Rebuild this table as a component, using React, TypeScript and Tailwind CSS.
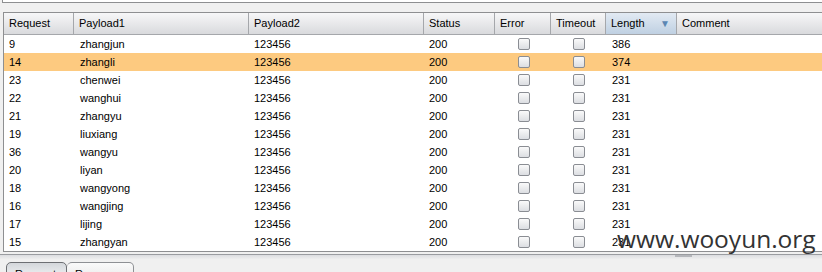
import React from "react";

type Row = {
  req: string;
  p1: string;
  len: string;
  selected?: boolean;
};

const rows: Row[] = [
  { req: "9", p1: "zhangjun", len: "386" },
  { req: "14", p1: "zhangli", len: "374", selected: true },
  { req: "23", p1: "chenwei", len: "231" },
  { req: "22", p1: "wanghui", len: "231" },
  { req: "21", p1: "zhangyu", len: "231" },
  { req: "19", p1: "liuxiang", len: "231" },
  { req: "36", p1: "wangyu", len: "231" },
  { req: "20", p1: "liyan", len: "231" },
  { req: "18", p1: "wangyong", len: "231" },
  { req: "16", p1: "wangjing", len: "231" },
  { req: "17", p1: "lijing", len: "231" },
  { req: "15", p1: "zhangyan", len: "231" },
];

const Checkbox = () => (
  <div className="w-[12px] h-[12px] rounded-[2px] border border-[#8a8d93] bg-gradient-to-b from-[#fafafa] to-[#dcdee2]" />
);

const HeadCell = ({ label, className, sorted }: { label: string; className: string; sorted?: boolean }) => (
  <div
    className={`${className} h-full flex items-center justify-between pl-[5px] pr-[6px] border-r border-[#a5a7ab] ${
      sorted ? "bg-gradient-to-b from-[#e2eaf3] to-[#bfd0e2]" : ""
    }`}
  >
    <span>{label}</span>
    {sorted && <span className="text-[#5b86b3] text-[10px] leading-none">▼</span>}
  </div>
);

export default function App() {
  return (
    <div
      className="relative w-[822px] h-[272px] overflow-hidden bg-[#f0f0f0] text-[11px] text-black"
      style={{ fontFamily: '"Liberation Sans", Arial, sans-serif' }}
    >
      {/* upper panel edge */}
      <div className="ml-[2px] h-[3px] bg-white border-l border-b border-[#8e8f91]" />

      <div className="mt-[9px] ml-[3px] bg-white border-l border-t border-b border-[#8e8f91]">
        <div className="flex h-[22px] bg-gradient-to-b from-[#f7f7f8] to-[#d9dadd] border-b border-[#a5a7ab]">
          <HeadCell label="Request" className="w-[70px]" />
          <HeadCell label="Payload1" className="w-[175px]" />
          <HeadCell label="Payload2" className="w-[175px]" />
          <HeadCell label="Status" className="w-[71px]" />
          <HeadCell label="Error" className="w-[56px]" />
          <HeadCell label="Timeout" className="w-[55px]" />
          <HeadCell label="Length" className="w-[71px]" sorted />
          <HeadCell label="Comment" className="flex-1 border-r-0" />
        </div>
        {rows.map((r) => (
          <div key={r.req} className={`flex h-[18px] items-center ${r.selected ? "bg-[#fdca80]" : ""}`}>
            <div className="w-[70px] pl-[5px]">{r.req}</div>
            <div className="w-[175px] pl-[6px]">{r.p1}</div>
            <div className="w-[175px] pl-[5px]">123456</div>
            <div className="w-[71px] pl-[5px]">200</div>
            <div className="w-[56px] flex justify-center pl-[1px]">
              <Checkbox />
            </div>
            <div className="w-[55px] flex justify-center">
              <Checkbox />
            </div>
            <div className="w-[71px] pl-[6px]">{r.len}</div>
            <div className="flex-1" />
          </div>
        ))}
      </div>

      {/* splitter */}
      <div className="mt-[2px] h-[1px] bg-[#9a9ca0]" />
      <div className="h-[4px] bg-gradient-to-b from-[#dcdde0] to-[#eeeeee]">
        <div className="w-[17px] h-[2px] bg-[#b5b7bb] ml-[675px]" />
      </div>

      {/* tabs */}
      <div className="flex mt-[3px] ml-[6px]">
        <div className="w-[61px] h-[14px] border border-[#6d6f73] rounded-t-[5px] bg-gradient-to-b from-[#d4d7db] to-[#eceef0] pl-[8px] pt-[3px]">
          Request
        </div>
        <div className="w-[67px] h-[14px] border border-l-0 border-[#8e9094] rounded-t-[5px] bg-gradient-to-b from-[#fafafa] to-[#eeeeee] pl-[8px] pt-[3px]">
          Response
        </div>
      </div>

      {/* watermark */}
      <div
        className="absolute left-[617px] top-[227px] text-[24.5px] leading-none text-[#333]"
        style={{ fontFamily: '"Open Sans", "DejaVu Sans", sans-serif' }}
      >
        www.wooyun.org
      </div>
    </div>
  );
}
